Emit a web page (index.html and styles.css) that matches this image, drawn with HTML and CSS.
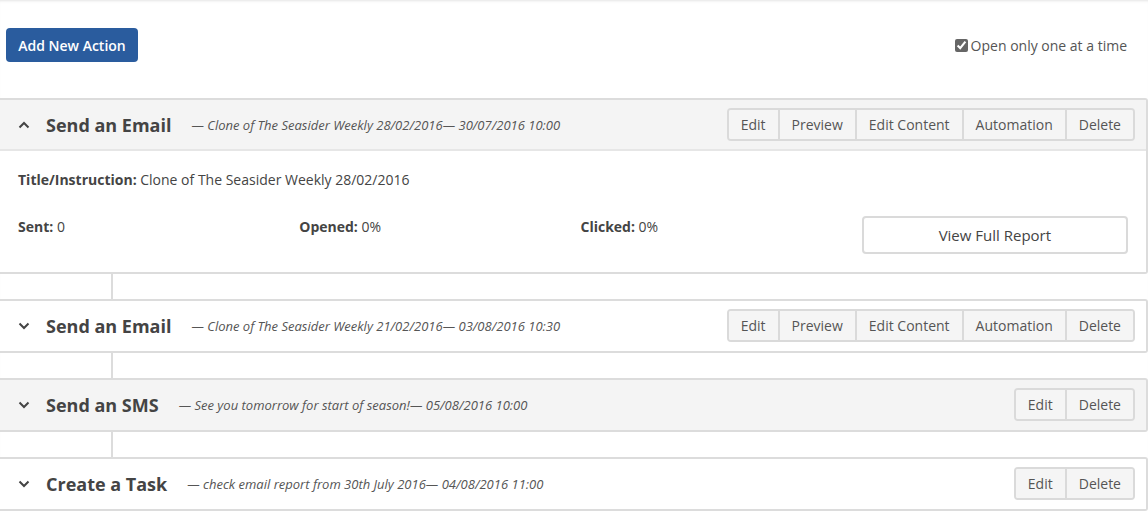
FILE: index.html
```html
<!DOCTYPE html>
<html>
<head>
    <title>Actions</title>
    <link rel="stylesheet" href="styles.css">
</head>
<body>
    <div class="toolbar">
        <button class="btn-primary">Add New Action</button>
        <label class="one-at-a-time"><input type="checkbox" checked> Open only one at a time</label>
    </div>

    <div class="action-list">
        <div class="action open">
            <div class="action-head">
                <svg class="chevron" width="12" height="8" viewBox="0 0 12 8"><path d="M1.5 6.5 L6 2 L10.5 6.5" fill="none" stroke="#444" stroke-width="2"/></svg>
                <span class="action-title">Send an Email</span>
                <span class="action-meta">— Clone of The Seasider Weekly 28/02/2016— 30/07/2016 10:00</span>
                <div class="btn-group">
                    <button>Edit</button><button>Preview</button><button>Edit Content</button><button>Automation</button><button>Delete</button>
                </div>
            </div>
            <div class="action-body">
                <p class="instruction"><b>Title/Instruction:</b> Clone of The Seasider Weekly 28/02/2016</p>
                <div class="stats">
                    <div><b>Sent:</b> 0</div>
                    <div><b>Opened:</b> 0%</div>
                    <div><b>Clicked:</b> 0%</div>
                    <div><button class="btn-report">View Full Report</button></div>
                </div>
            </div>
        </div>
        <div class="connector"></div>

        <div class="action">
            <div class="action-head">
                <svg class="chevron" width="12" height="8" viewBox="0 0 12 8"><path d="M1.5 1.5 L6 6 L10.5 1.5" fill="none" stroke="#444" stroke-width="2"/></svg>
                <span class="action-title">Send an Email</span>
                <span class="action-meta">— Clone of The Seasider Weekly 21/02/2016— 03/08/2016 10:30</span>
                <div class="btn-group">
                    <button>Edit</button><button>Preview</button><button>Edit Content</button><button>Automation</button><button>Delete</button>
                </div>
            </div>
        </div>
        <div class="connector"></div>

        <div class="action grey">
            <div class="action-head">
                <svg class="chevron" width="12" height="8" viewBox="0 0 12 8"><path d="M1.5 1.5 L6 6 L10.5 1.5" fill="none" stroke="#444" stroke-width="2"/></svg>
                <span class="action-title">Send an SMS</span>
                <span class="action-meta">— See you tomorrow for start of season!— 05/08/2016 10:00</span>
                <div class="btn-group">
                    <button>Edit</button><button>Delete</button>
                </div>
            </div>
        </div>
        <div class="connector"></div>

        <div class="action">
            <div class="action-head">
                <svg class="chevron" width="12" height="8" viewBox="0 0 12 8"><path d="M1.5 1.5 L6 6 L10.5 1.5" fill="none" stroke="#444" stroke-width="2"/></svg>
                <span class="action-title">Create a Task</span>
                <span class="action-meta">— check email report from 30th July 2016— 04/08/2016 11:00</span>
                <div class="btn-group">
                    <button>Edit</button><button>Delete</button>
                </div>
            </div>
        </div>
    </div>
</body>
</html>
```

FILE: styles.css
```css
body {
    font-family: "Open Sans", sans-serif;
    font-size: 14px;
    color: #444;
    margin: 0;
    box-shadow: inset 0 3px 3px -2px #e4e4e4;
}

button {
    font-family: "Open Sans", sans-serif;
}

.toolbar {
    display: flex;
    justify-content: space-between;
    align-items: center;
    padding: 28px 21px 36px 6px;
}

.btn-primary {
    background: #2a5c9e;
    color: #fff;
    border: none;
    border-radius: 4px;
    font-size: 14px;
    font-weight: 600;
    height: 34px;
    width: 132px;
    padding: 0;
}

.one-at-a-time {
    display: flex;
    align-items: center;
    gap: 3px;
    color: #555;
    font-size: 14px;
}

.one-at-a-time input {
    margin: 0;
    width: 13px;
    height: 13px;
    accent-color: #666;
}

.action {
    border: 2px solid #dcdcdc;
    border-left: none;
    border-radius: 0 3px 3px 0;
    background: #fff;
}

.action.open .action-head,
.action.grey {
    background: #f4f4f4;
}

.action-head {
    display: flex;
    align-items: center;
    height: 33px;
    padding: 8px 11px 9px 18px;
}

.action.open .action-head {
    border-bottom: 2px solid #e6e6e6;
    padding-bottom: 8px;
}

.chevron {
    margin-right: 16px;
}

.action-title {
    font-size: 18px;
    font-weight: 700;
    color: #444;
    margin-right: 20px;
}

.action-meta {
    font-size: 13px;
    font-style: italic;
    color: #555;
}

.btn-group {
    margin-left: auto;
    display: flex;
    border: 2px solid #dadada;
    border-radius: 4px;
    overflow: hidden;
    height: 33px;
    box-sizing: border-box;
}

.btn-group button {
    background: #f5f5f5;
    border: none;
    border-left: 2px solid #dadada;
    color: #555;
    font-size: 14px;
    padding: 0 12px;
}

.btn-group button:first-child {
    border-left: none;
}

.action-body {
    padding: 19px 18px 18px 18px;
}

.instruction {
    margin: 0 0 27px;
    line-height: 20px;
    color: #444;
}

.stats {
    display: grid;
    grid-template-columns: repeat(4, 1fr);
    column-gap: 15px;
    line-height: 20px;
}

.btn-report {
    width: 100%;
    height: 38px;
    margin-top: -1px;
    background: #fff;
    border: 2px solid #dadada;
    border-radius: 4px;
    color: #444;
    font-size: 15px;
}

.connector {
    width: 2px;
    height: 25px;
    margin-left: 111px;
    background: #dcdcdc;
}
```
